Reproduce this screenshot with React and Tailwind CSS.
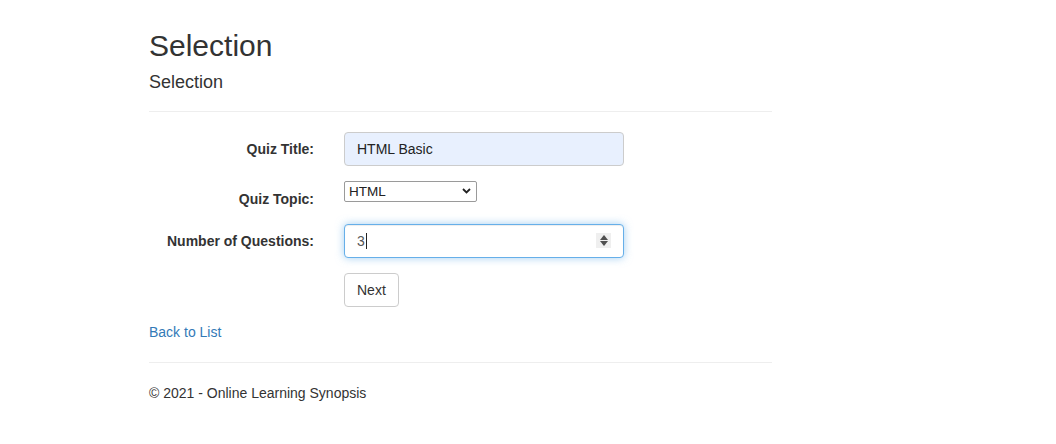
export default function App() {
  return (
    <div className="min-h-screen w-full bg-white pl-[149px] pt-[29px] font-['Liberation_Sans',Arial,sans-serif] text-[14px] leading-[20px] text-[#333]">
      <div className="w-[623px]">
        <h2 className="text-[30px] font-normal leading-[33px]">Selection</h2>
        <h4 className="mt-[11px] text-[18px] font-normal leading-[19.8px]">Selection</h4>
        <hr className="mb-[20px] mt-[18px] border-0 border-t border-[#eee]" />

        <form onSubmit={(e) => e.preventDefault()}>
          <div className="mb-[15px] flex">
            <label className="w-[165px] pt-[7px] text-right font-bold">Quiz Title:</label>
            <div className="ml-[30px] flex h-[34px] w-[280px] items-center rounded-[4px] border border-[#ccc] bg-[#e8f0fe] px-[12px] text-[#222]">
              HTML Basic
            </div>
          </div>

          <div className="mb-[15px] flex">
            <label className="w-[165px] pt-[8px] text-right font-bold">Quiz Topic:</label>
            <div className="ml-[30px] flex h-[21px] w-[133px] items-center justify-between rounded-[2px] border border-[#9a9a9a] bg-white pl-[4px] pr-[5px] text-[13.5px] leading-[17px] text-[#222]">
              <span>HTML</span>
              <svg width="9" height="6" viewBox="0 0 9 6">
                <path d="M1 1 L4.5 4.5 L8 1" fill="none" stroke="#222" strokeWidth="1.8" />
              </svg>
            </div>
          </div>

          <div className="mb-[15px] flex">
            <label className="w-[165px] pt-[7px] text-right font-bold">Number of Questions:</label>
            <div className="relative ml-[30px] flex h-[34px] w-[280px] items-center rounded-[4px] border border-[#66afe9] bg-white px-[12px] text-[#555] shadow-[inset_0_1px_1px_rgba(0,0,0,0.075),0_0_8px_rgba(102,175,233,0.6)]">
              <span>3</span>
              <span className="ml-[1px] inline-block h-[16px] w-[1px] bg-[#222]" />
              <div className="absolute right-[12px] top-[8px] flex h-[15px] w-[15px] flex-col items-center justify-center gap-[1px] bg-[#efefef]">
                <svg width="8" height="5" viewBox="0 0 8 5">
                  <path d="M4 0 L8 5 L0 5 Z" fill="#505050" />
                </svg>
                <svg width="8" height="5" viewBox="0 0 8 5">
                  <path d="M0 0 L8 0 L4 5 Z" fill="#505050" />
                </svg>
              </div>
            </div>
          </div>

          <div className="mb-[15px] flex">
            <div className="w-[165px]" />
            <button
              type="submit"
              className="ml-[30px] h-[34px] rounded-[4px] border border-[#ccc] bg-white px-[12px] text-[14px] leading-[20px] text-[#333]"
            >
              Next
            </button>
          </div>
        </form>

        <div>
          <a href="#" className="text-[#337ab7] no-underline">Back to List</a>
        </div>

        <hr className="mb-[20px] mt-[20px] border-0 border-t border-[#eee]" />
        <footer>
          <p>© 2021 - Online Learning Synopsis</p>
        </footer>
      </div>
    </div>
  );
}
